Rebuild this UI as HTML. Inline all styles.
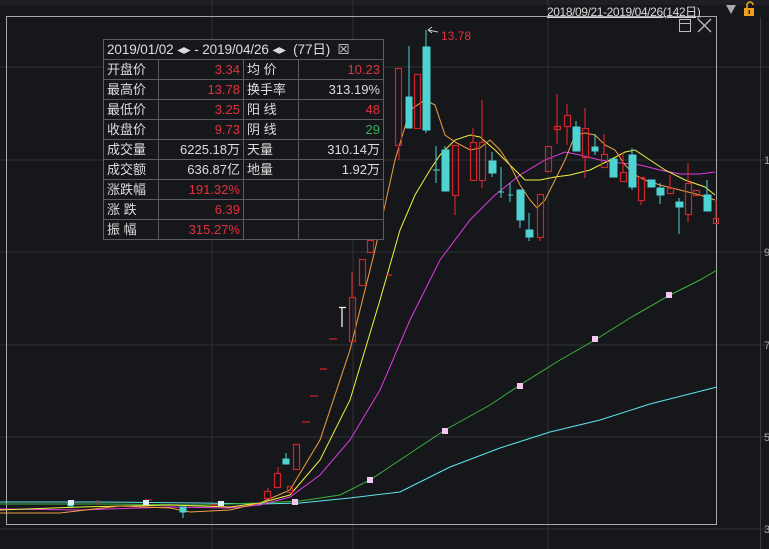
<!DOCTYPE html>
<html><head><meta charset="utf-8"><style>
body{margin:0;width:769px;height:549px;background:#16171b;overflow:hidden;position:relative;font-family:"Liberation Sans","Noto Sans CJK SC",sans-serif;}
svg{position:absolute;left:0;top:0}
#hdr{position:absolute;left:547px;top:3px;font-size:12px;color:#d8d8d8;text-decoration:underline;letter-spacing:-0.4px}
table{position:absolute;left:103px;top:39px;border-collapse:collapse;background:#16171b;font-size:13px;color:#ddd}
td{border:1px solid #5a5c62;height:19px;padding:0 3px;line-height:19px;white-space:nowrap}
td.v{text-align:right}
.r{color:#e0323c}.g{color:#2fb45a}
</style></head><body>
<svg width="769" height="549">
<rect x="0" y="0" width="769" height="5" fill="#1e1f24"/>
<g stroke="#303136" stroke-width="1">
<line x1="0" y1="67" x2="769" y2="67"/><line x1="0" y1="160" x2="769" y2="160"/><line x1="0" y1="252" x2="769" y2="252"/><line x1="0" y1="345" x2="769" y2="345"/><line x1="0" y1="437" x2="769" y2="437"/><line x1="0" y1="529" x2="769" y2="529"/>
<line x1="212" y1="0" x2="212" y2="549"/><line x1="353" y1="0" x2="353" y2="549"/><line x1="548" y1="0" x2="548" y2="549"/>
</g>
<line x1="760.5" y1="17" x2="760.5" y2="549" stroke="#3a3b40"/>
<rect x="6.5" y="16.5" width="710" height="508" fill="none" stroke="#a8a8a8"/>
<g fill="#aaa" font-size="11"><text x="764" y="256">9</text><text x="764" y="349">7</text><text x="764" y="441">5</text><text x="764" y="533">3</text><text x="764" y="164">1</text></g>
<rect x="679.5" y="19.5" width="11" height="12" fill="none" stroke="#bbb"/><line x1="679" y1="23.5" x2="691" y2="23.5" stroke="#bbb"/>
<path d="M698 19 L711 32 M711 19 L698 32" stroke="#bbb" stroke-width="1.3"/>
<path d="M726 5 L736 5 L731 14Z" fill="#aaa"/>
<rect x="744" y="8" width="10" height="8" fill="#f0a01e"/><path d="M747 8 V5 a3 3 0 0 1 6 0" stroke="#f0a01e" stroke-width="1.6" fill="none"/><rect x="748.5" y="10" width="1.5" height="4" fill="#222"/>
<g fill="none" stroke-width="1">
<polyline stroke="#5ee4ea" points="0,502 100,502 200,503 260,504 300,503 350,498 400,492 450,467 500,448 550,432 600,420 650,404 717,387"/>
<polyline stroke="#3bb23b" points="0,504 100,504 200,505 260,503 300,501 340,495 370,480 400,460 445,430 490,405 520,385 560,360 595,340 630,318 670,295 700,280 717,270"/>
<polyline stroke="#e03ae0" points="0,509 80,510 170,507 230,508 260,505 290,497 320,475 350,440 380,390 410,320 440,260 470,220 495,195 520,175 545,160 565,152 580,155 600,160 620,163 640,165 660,170 680,174 700,174 715,172"/>
<polyline stroke="#f0f040" points="0,510 80,507 170,505 230,507 260,503 290,495 320,460 350,400 380,300 400,230 415,195 430,170 440,155 455,140 470,135 480,137 495,150 510,165 525,180 540,180 555,177 570,175 590,170 610,160 625,152 635,150 650,160 665,170 685,180 705,187 715,195"/>
<polyline stroke="#f0a040" points="0,513 60,513 120,506 170,508 190,512 230,510 260,503 290,490 320,440 350,350 375,250 395,160 410,110 425,100 435,105 445,135 455,142 470,150 480,148 490,140 500,150 510,165 520,185 530,200 537,208 545,200 555,180 565,160 575,135 585,133 595,135 605,145 615,150 625,165 635,175 645,180 660,185 680,190 700,195 715,200"/>
</g>
<g fill="none" stroke="#d0242c" stroke-width="1.2">
<rect x="264.5" y="491.5" width="6" height="7"/><rect x="274.5" y="473.5" width="6" height="14"/><rect x="293.5" y="444.5" width="6" height="25"/>
<rect x="349.5" y="297.5" width="6" height="44"/><rect x="359.5" y="259.5" width="6" height="26"/><rect x="367.5" y="240.5" width="6" height="12"/>
<rect x="395.5" y="68.5" width="6" height="77"/><rect x="414.5" y="74.5" width="6" height="54"/><rect x="452.5" y="145.5" width="6" height="50"/>
<rect x="470.5" y="142.5" width="6" height="38"/><rect x="479.5" y="142.5" width="6" height="38"/><rect x="537.5" y="194.5" width="6" height="43"/>
<rect x="545.5" y="146.5" width="6" height="25"/><rect x="554.5" y="126.5" width="6" height="3"/><rect x="564.5" y="115.5" width="6" height="11"/>
<rect x="582.5" y="128.5" width="6" height="29"/><rect x="601.5" y="154.5" width="6" height="13"/><rect x="620.5" y="172.5" width="6" height="9"/>
<rect x="638.5" y="177.5" width="6" height="23"/><rect x="667.5" y="188.5" width="6" height="5"/><rect x="685.5" y="183.5" width="6" height="31"/>
<rect x="693.5" y="190.5" width="6" height="5"/><rect x="713.5" y="218.5" width="5" height="5"/><rect x="287.5" y="486.5" width="5" height="6"/>
<path d="M268 488V491M278 467V473M352 272V297M399 145V160M455 195V215M473 128V142M482 100V142M482 180V188M540 237V241M557 94V144M567 104V115M567 126V145M585 108V128M585 157V178M604 134V154M623 153V172M641 200V205M670 175V188M688 163V183M688 214V222M716 200V218M302 422H310M310 396H318M320 369H327M329 339H337M386 275H392M98 500V505M210 505H220M145 500H152"/>
</g>
<g fill="#4fd2d2" stroke="#4fd2d2" stroke-width="1">
<rect x="406" y="97" width="6" height="31"/><rect x="423" y="47" width="7" height="83"/><rect x="442" y="150" width="7" height="41"/>
<rect x="489" y="161" width="7" height="12"/><rect x="517" y="190" width="7" height="30"/><rect x="526" y="230" width="7" height="7"/>
<rect x="573" y="127" width="7" height="24"/><rect x="592" y="147" width="6" height="4"/><rect x="610" y="159" width="7" height="18"/>
<rect x="629" y="155" width="7" height="32"/><rect x="648" y="180" width="7" height="7"/><rect x="657" y="188" width="7" height="7"/>
<rect x="676" y="202" width="7" height="5"/><rect x="704" y="195" width="7" height="16"/><rect x="283" y="459" width="6" height="5"/>
<rect x="180" y="507" width="6" height="5"/><rect x="68" y="502" width="5" height="4"/>
<path d="M409 46V97M426 30V47M426 130V133M436 146V183M433 170H440M445 146V150M492 152V161M492 173V177M501 167V198M498 192H504M510 183V202M508 195H513M520 220V228M529 213V241M576 121V127M595 134V155M632 148V155M632 187V190M660 183V204M679 198V234M707 180V195M286 453V459M183 512V518" fill="none"/>
</g>
<path d="M342 307V327M339 307.5H346" stroke="#fff" stroke-width="1.2"/>
<g fill="#f6c8f0"><rect x="292" y="499" width="6" height="6"/><rect x="367" y="477" width="6" height="6"/><rect x="442" y="428" width="6" height="6"/><rect x="517" y="383" width="6" height="6"/><rect x="592" y="336" width="6" height="6"/><rect x="666" y="292" width="6" height="6"/></g>
<g fill="#dbeefa"><rect x="68" y="500" width="6" height="5"/><rect x="143" y="500" width="6" height="5"/><rect x="218" y="501" width="6" height="5"/></g>
<path d="M438 32 L428 30 M428 30 L432 27 M428 30 L432 33" stroke="#ccc" fill="none"/>
<text x="441" y="40" fill="#e0323c" font-size="12">13.78</text>
</svg>
<div id="hdr">2018/09/21-2019/04/26(142日)</div>
<table>
<tr><td colspan="4" style="font-size:13.5px;letter-spacing:-0.1px">2019/01/02 ◂▸ - 2019/04/26 ◂▸ &nbsp;(77日) &nbsp;☒</td></tr>
<tr><td style="width:48px">开盘价</td><td class="v r" style="width:78px">3.34</td><td style="width:48px">均 价</td><td class="v r" style="width:78px">10.23</td></tr>
<tr><td>最高价</td><td class="v r">13.78</td><td>换手率</td><td class="v">313.19%</td></tr>
<tr><td>最低价</td><td class="v r">3.25</td><td>阳 线</td><td class="v r">48</td></tr>
<tr><td>收盘价</td><td class="v r">9.73</td><td>阴 线</td><td class="v g">29</td></tr>
<tr><td>成交量</td><td class="v">6225.18万</td><td>天量</td><td class="v">310.14万</td></tr>
<tr><td>成交额</td><td class="v">636.87亿</td><td>地量</td><td class="v">1.92万</td></tr>
<tr><td>涨跌幅</td><td class="v r">191.32%</td><td></td><td></td></tr>
<tr><td>涨 跌</td><td class="v r">6.39</td><td></td><td></td></tr>
<tr><td>振 幅</td><td class="v r">315.27%</td><td></td><td></td></tr>
</table>
</body></html>
